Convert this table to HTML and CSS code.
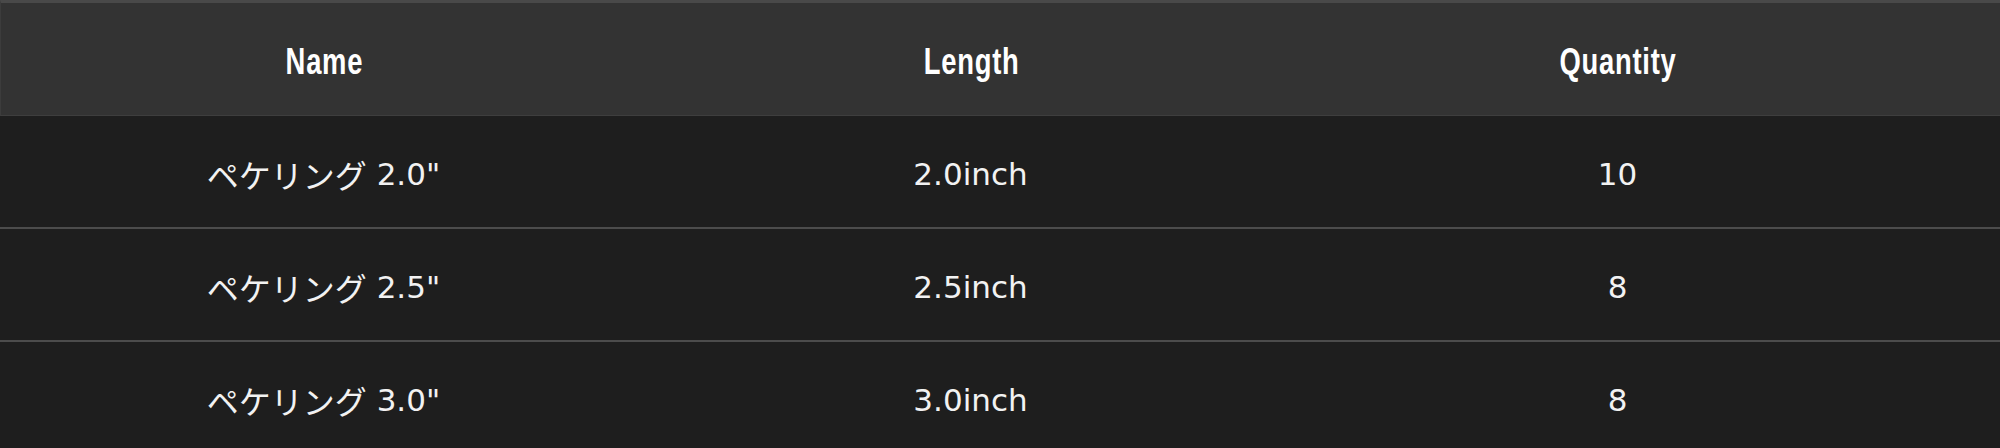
FILE: index.html
```html
<!DOCTYPE html>
<html lang="ja">
<head>
<meta charset="utf-8">
<title>Peke rings</title>
<link rel="stylesheet" href="styles.css">
</head>
<body>
<div class="table">
  <div class="row head">
    <div class="cell"><span class="label">Name</span></div>
    <div class="cell"><span class="label">Length</span></div>
    <div class="cell"><span class="label">Quantity</span></div>
    <div class="cell filler"></div>
  </div>
  <div class="row">
    <div class="cell"><span class="jp">ペケリング</span>&nbsp;2.0"</div>
    <div class="cell">2.0inch</div>
    <div class="cell">10</div>
    <div class="cell filler"></div>
  </div>
  <div class="row">
    <div class="cell"><span class="jp">ペケリング</span>&nbsp;2.5"</div>
    <div class="cell">2.5inch</div>
    <div class="cell">8</div>
    <div class="cell filler"></div>
  </div>
  <div class="row last">
    <div class="cell"><span class="jp">ペケリング</span>&nbsp;3.0"</div>
    <div class="cell">3.0inch</div>
    <div class="cell">8</div>
    <div class="cell filler"></div>
  </div>
</div>
</body>
</html>
```

FILE: styles.css
```css
html, body {
  margin: 0;
  padding: 0;
  background: #1e1e1e;
  height: 448px;
  overflow: hidden;
}

.table {
  display: flex;
  flex-direction: column;
  width: 2000px;
}

.row {
  display: grid;
  grid-template-columns: 647px 647px 647px 1fr;
  height: 111px;
  border-bottom: 2px solid #4c4c4c;
  background: #1e1e1e;
  color: #f2f2f2;
  font-family: "DejaVu Sans", "Noto Sans CJK JP", sans-serif;
  font-size: 31px;
}

.row.last {
  border-bottom: none;
}

.cell {
  display: flex;
  align-items: center;
  justify-content: center;
  padding-top: 4px;
  box-sizing: border-box;
  white-space: nowrap;
}

.jp {
  font-family: "Noto Sans CJK JP", sans-serif;
  font-size: 32px;
}

.row.head {
  height: 112px;
  background: #333333;
  border-top: 3px solid #494949;
  border-left: 1px solid #3c3c3c;
  border-bottom: 1px solid #3e3e3e;
  color: #ffffff;
  font-family: "Liberation Sans", "Noto Sans", sans-serif;
  font-weight: 700;
  font-size: 37px;
}

.row.head .cell {
  padding-top: 5px;
}

.label {
  display: inline-block;
  transform: scaleX(0.74);
  letter-spacing: 1px;
}
```
